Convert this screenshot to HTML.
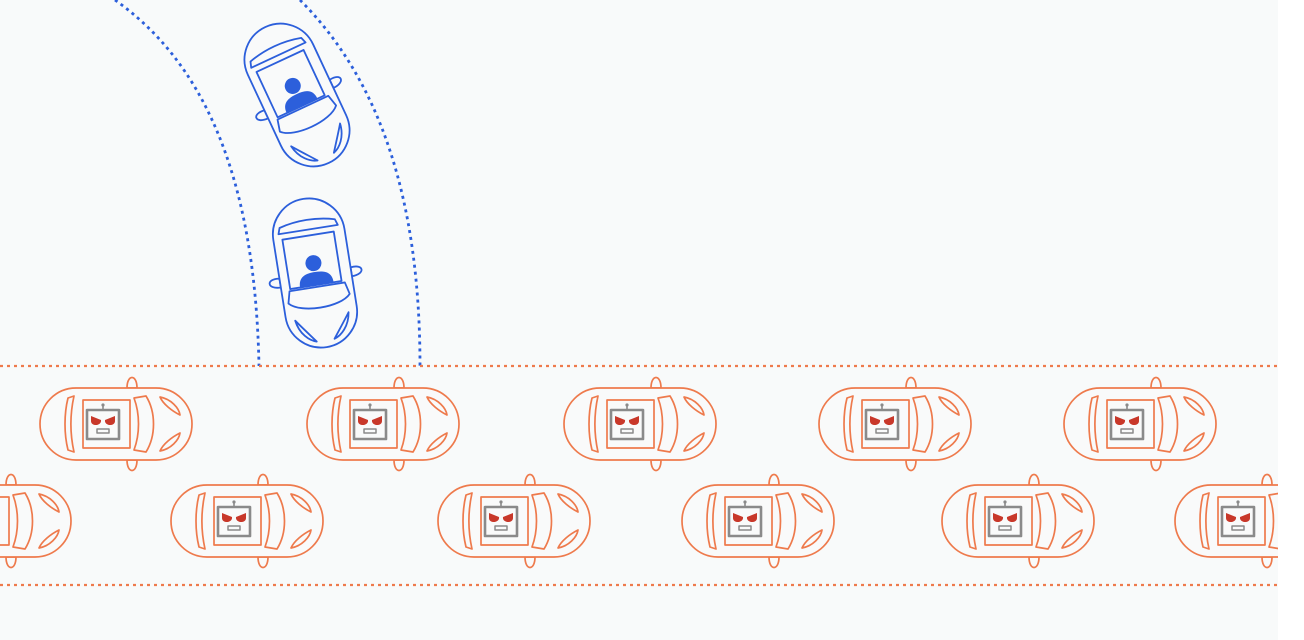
<!DOCTYPE html>
<html><head><meta charset="utf-8"><style>
html,body{margin:0;padding:0;background:#fff;}
svg{display:block}
</style></head><body>
<svg width="1304" height="640" viewBox="0 0 1304 640" xmlns="http://www.w3.org/2000/svg">
<defs>
<g id="oc" fill="none" stroke="#ee7a4c" stroke-width="1.7" stroke-linejoin="round">
  <path d="M11,-36 C11,-50 21,-50 21,-36 Z M11,36 C11,50 21,50 21,36 Z" fill="#f9fafa"/>
  <rect x="-76" y="-36" width="152" height="72" rx="36" fill="#f9fafa"/>
  <path d="M-42,-28 L-48,-26 C-52,-10 -52,10 -48,26 L-42,28 C-46,10 -46,-10 -42,-28 Z"/>
  <rect x="-33" y="-24" width="47" height="48"/>
  <path d="M18,-26 L30,-28 C40,-12 40,12 30,28 L18,26 C24,10 24,-10 18,-26 Z"/>
  <path d="M44,-27 C55,-25 63,-16 64,-9 C56,-13 47,-20 44,-27 Z"/>
  <path d="M44,27 C55,25 63,16 64,9 C56,13 47,20 44,27 Z"/>
  <rect x="-29" y="-14" width="32" height="29" fill="#f9fafa" stroke="#8a8a8a" stroke-width="2.6"/>
  <line x1="-13" y1="-14" x2="-13" y2="-19" stroke="#8a8a8a" stroke-width="1.6"/>
  <circle cx="-13" cy="-19" r="1.6" fill="#8a8a8a" stroke="none"/>
  <path d="M-25,-8 L-15,-4 C-14,2 -25,3 -25,-3 Z M-1,-8 L-11,-4 C-12,2 -1,3 -1,-3 Z" fill="#c8382a" stroke="none"/>
  <rect x="-19" y="5" width="12" height="4" stroke="#8a8a8a" stroke-width="1.5"/>
</g>
<g id="bc" fill="none" stroke="#2c5fdb" stroke-width="1.8" stroke-linejoin="round">
  <path d="M-36,0 C-50,-2 -50,9 -36,9 Z M36,0 C50,-2 50,9 36,9 Z" fill="#f9fafa"/>
  <rect x="-36" y="-75" width="72" height="150" rx="36" fill="#f9fafa"/>
  <path d="M-28,-50 L-30,-44 L30,-44 L28,-50 C10,-55 -10,-55 -28,-50 Z"/>
  <rect x="-27" y="-38" width="52" height="50"/>
  <circle cx="0" cy="-10" r="8" fill="#2c5fdb" stroke="none"/>
  <path d="M-17,12 C-17,1 -9,-1 0,-1 C9,-1 17,1 17,12 Z" fill="#2c5fdb" stroke="none"/>
  <path d="M-28,14 L28,14 L31,26 C20,38 -20,38 -31,26 Z"/>
  <path d="M-27,44 C-25,58 -16,66 -9,68 C-15,60 -22,51 -27,44 Z"/>
  <path d="M27,44 C25,58 16,66 9,68 C15,60 22,51 27,44 Z"/>
</g>
</defs>
<rect x="0" y="0" width="1278" height="640" fill="#f8fafa"/>
<path d="M115,0 C200,60 255,170 259,366" fill="none" stroke="#2c5fdb" stroke-width="2.8" stroke-dasharray="3,4"/>
<path d="M300,0 C380,80 420,200 420,366" fill="none" stroke="#2c5fdb" stroke-width="2.8" stroke-dasharray="3,4"/>
<line x1="0" y1="366" x2="1278" y2="366" stroke="#ee7a4c" stroke-width="2.2" stroke-dasharray="3,4"/>
<line x1="0" y1="585" x2="1278" y2="585" stroke="#ee7a4c" stroke-width="2.2" stroke-dasharray="3,4"/>
<use href="#bc" transform="translate(297,95) rotate(-25)"/>
<use href="#bc" transform="translate(315,273) rotate(-9)"/>
<use href="#oc" transform="translate(116,424)"/>
<use href="#oc" transform="translate(383,424)"/>
<use href="#oc" transform="translate(640,424)"/>
<use href="#oc" transform="translate(895,424)"/>
<use href="#oc" transform="translate(1140,424)"/>
<use href="#oc" transform="translate(-5,521)"/>
<use href="#oc" transform="translate(247,521)"/>
<use href="#oc" transform="translate(514,521)"/>
<use href="#oc" transform="translate(758,521)"/>
<use href="#oc" transform="translate(1018,521)"/>
<use href="#oc" transform="translate(1251,521)"/>
<rect x="1278" y="0" width="26" height="640" fill="#fff"/>
</svg>
</body></html>
